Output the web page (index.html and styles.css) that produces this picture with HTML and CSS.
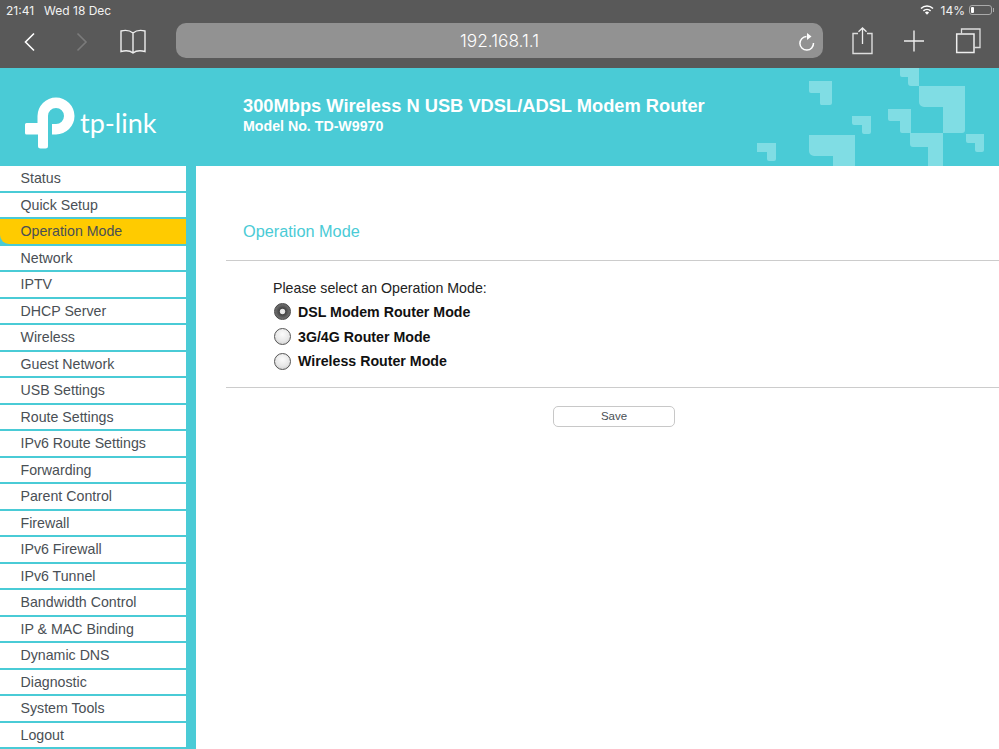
FILE: index.html
```html
<!DOCTYPE html>
<html lang="en">
<head>
<meta charset="utf-8">
<title>Operation Mode</title>
<link rel="stylesheet" href="styles.css">
</head>
<body>
<div class="page">
  <header class="chrome">
    <div class="status">
      <span class="time">21:41</span>
      <span class="date">Wed 18 Dec</span>
      <span class="status-right">
        <svg class="wifi" width="14" height="10" viewBox="0 0 14 10"><path d="M7 9.8 4.9 7.5a3 3 0 0 1 4.2 0Z" fill="#fff"/><path d="M3.4 5.9a5.2 5.2 0 0 1 7.2 0M1 3.5a8.6 8.6 0 0 1 12 0" fill="none" stroke="#fff" stroke-width="1.5"/></svg>
        <span class="pct">14%</span>
        <span class="battery"><span class="battery-fill"></span></span>
        <span class="battery-nub"></span>
      </span>
    </div>
    <div class="toolbar">
      <svg class="icon back" viewBox="0 0 28 28"><path d="M18 6.5 9.5 15l8.5 8.5" stroke="#fff" stroke-width="1.6" fill="none"/></svg>
      <svg class="icon forward" viewBox="0 0 28 28"><path d="M9.5 6.5 18 15l-8.5 8.5" stroke="#7b7b7b" stroke-width="1.6" fill="none"/></svg>
      <svg class="icon book" viewBox="0 0 28 28"><path d="M14 6C11 3.5 6 3 2 4v20.500c4-1 9-1 12 1.500 3-2.500 8-2.500 12-1.500V4c-4-1-9-.5-12 2v19.500" stroke="#eee" stroke-width="1.400" fill="none"/></svg>
      <div class="url">
        <span class="url-text">192.168.1.1</span>
        <svg class="reload" width="20" height="20" viewBox="0 0 20 20"><path d="M9.500 4.500A6.800 6.800 0 1 0 16.500 11" stroke="#fff" stroke-width="1.500" fill="none"/><path d="M10 1 14.500 4.500 10 8Z" fill="#fff"/></svg>
      </div>
      <svg class="icon share" viewBox="0 0 28 28"><path d="M10 6.500H5v20h19v-20h-5" stroke="#ddd" stroke-width="1.400" fill="none"/><path d="M14.500 1v16M10.500 4.800 14.500 1l4 3.800" stroke="#eee" stroke-width="1.300" fill="none"/></svg>
      <svg class="icon plus" viewBox="0 0 28 28"><path d="M4 14h20M14 3.500v21" stroke="#eee" stroke-width="1.400" fill="none"/></svg>
      <svg class="icon tabs" viewBox="0 0 28 28"><path d="M2.700 7H20v18.500H2.700Z" stroke="#eee" stroke-width="1.500" fill="none"/><path d="M7.500 6.500V2H26v18.500h-5.500" stroke="#ddd" stroke-width="1.300" fill="none"/></svg>
    </div>
  </header>

  <section class="banner">
    <svg class="pattern" width="999" height="98" viewBox="0 68 999 98" aria-hidden="true">
      <g fill="#80dde4">
        <path d="M900 68h19v18h-8a3 3 0 0 1-3-3v-6h-6a2 2 0 0 1-2-2Z"/>
        <path d="M919 86h46v44a3 3 0 0 1-3 3h-19v-26h-19a5 5 0 0 1-5-5Z"/>
        <path d="M809 81h23v22a2 2 0 0 1-2 2h-9a2 2 0 0 1-1-2v-10h-9a2 2 0 0 1-2-2Z"/>
        <path d="M852 116h19v16a2 2 0 0 1-2 2h-5a2 2 0 0 1-2-2v-7h-8a2 2 0 0 1-2-2Z"/>
        <path d="M888 109h23v24h-9a2 2 0 0 1-2-2v-10h-10a2 2 0 0 1-2-2Z"/>
        <path d="M910 133h33v33h-15v-19h-15a3 3 0 0 1-3-3Z"/>
        <path d="M966 134h18v16a2 2 0 0 1-2 2h-5a2 2 0 0 1-2-2v-7h-7a2 2 0 0 1-2-2Z"/>
        <path d="M809 135h46v31h-22v-10h-19a5 5 0 0 1-5-5Z"/>
        <path d="M757 143h19v16a2 2 0 0 1-2 2h-5a2 2 0 0 1-2-2v-7h-10Z"/>
      </g>
    </svg>
    <div class="brand">
      <svg class="logo-mark" width="51" height="53" viewBox="25 94 51 53"><path d="M25 122.500q0-1.500 1.500-1.500H37.500v-7A18.500 18.500 0 1 1 56 132.500h-4V122h4a8 8 0 1 0-8-8v30q0 2.500-2.500 2.500h-5q-2.500 0-2.500-2.500v-11.500H26.500q-1.500 0-1.500-1.500Z" fill="#fff"/></svg>
      <span class="logo-text">tp-link</span>
    </div>
    <div class="product">
      <div class="product-name">300Mbps Wireless N USB VDSL/ADSL Modem Router</div>
      <div class="product-model">Model No. TD-W9970</div>
    </div>
  </section>

  <div class="main">
    <nav class="menu">
      <a class="item">Status</a>
      <a class="item">Quick Setup</a>
      <a class="item active">Operation Mode</a>
      <a class="item">Network</a>
      <a class="item">IPTV</a>
      <a class="item">DHCP Server</a>
      <a class="item">Wireless</a>
      <a class="item">Guest Network</a>
      <a class="item">USB Settings</a>
      <a class="item">Route Settings</a>
      <a class="item">IPv6 Route Settings</a>
      <a class="item">Forwarding</a>
      <a class="item">Parent Control</a>
      <a class="item">Firewall</a>
      <a class="item">IPv6 Firewall</a>
      <a class="item">IPv6 Tunnel</a>
      <a class="item">Bandwidth Control</a>
      <a class="item">IP &amp; MAC Binding</a>
      <a class="item">Dynamic DNS</a>
      <a class="item">Diagnostic</a>
      <a class="item">System Tools</a>
      <a class="item">Logout</a>
    </nav>
    <main class="content">
      <h1 class="title">Operation Mode</h1>
      <form class="form">
        <p class="prompt">Please select an Operation Mode:</p>
        <label class="option"><span class="radio checked"></span>DSL Modem Router Mode</label>
        <label class="option"><span class="radio"></span>3G/4G Router Mode</label>
        <label class="option"><span class="radio"></span>Wireless Router Mode</label>
      </form>
      <div class="actions"><button class="save" type="button">Save</button></div>
    </main>
  </div>
</div>
</body>
</html>
```
FILE: styles.css
```css
* { box-sizing: border-box; }
html, body { margin: 0; padding: 0; }
body { font-family: "Liberation Sans", Arial, sans-serif; background: #fff; }
.page { width: 999px; height: 749px; overflow: hidden; display: flex; flex-direction: column; }

/* Browser chrome */
.chrome { height: 68px; background: #595959; color: #fff; flex: none; }
.status { height: 23px; display: flex; align-items: center; padding: 0 5px 3px 6px; font-family: Inter, "Liberation Sans", sans-serif; font-size: 12px; color: #f2f2f2; }
.date { margin-left: 10px; }
.status-right { margin-left: auto; display: flex; align-items: center; }
.pct { margin-left: 7px; }
.battery { margin-left: 4px; width: 23px; height: 10px; border: 1px solid #aaa; border-radius: 3px; padding: 1px; display: block; }
.battery-fill { display: block; width: 3px; height: 100%; background: #fff; border-radius: 1px; }
.battery-nub { width: 1px; height: 4px; background: #aaa; margin-left: 1px; }
.toolbar { height: 45px; display: flex; align-items: center; padding: 0 0 10px 16px; }
.icon { width: 28px; height: 28px; flex: none; display: block; }
.forward { margin-left: 24px; }
.book { margin-left: 22.500px; }
.url { margin-left: 29.500px; width: 647px; height: 35px; border-radius: 10px; background: #929292; position: relative; display: flex; align-items: center; justify-content: center; }
.url-text { font-family: Inter, "Liberation Sans", sans-serif; font-size: 17.300px; font-weight: 300; color: #fff; }
.reload { position: absolute; right: 6px; top: 9px; }
.share { margin-left: 25px; }
.plus { margin-left: 24px; }
.tabs { margin-left: 26px; }

/* Router banner */
.banner { height: 98px; flex: none; background: #4acbd6; position: relative; display: flex; align-items: center; color: #fff; }
.pattern { position: absolute; left: 0; top: 0; }
.brand { width: 243px; padding-left: 25px; display: flex; align-items: flex-start; position: relative; height: 53px; flex: none; margin-top: 10px; }
.logo-text { font-family: Lato, sans-serif; font-size: 27px; font-weight: 400; margin-left: 4px; margin-top: 11px; line-height: 32px; color: #fff; }
.product { position: relative; margin-top: -3px; font-weight: bold; }
.product-name { font-size: 18.300px; line-height: 20px; }
.product-model { font-size: 14.200px; line-height: 20px; }

/* Main layout */
.main { flex: 1; display: flex; min-height: 0; }
.menu { width: 195.500px; flex: none; background: #4acbd6; padding-right: 9.500px; display: grid; grid-auto-rows: 24.500px; row-gap: 2px; }
.item { background: #fff; color: #4a4f55; font-size: 14.200px; line-height: 24.500px; padding-left: 20.500px; white-space: nowrap; }
.item.active { background: #ffcb00; border-bottom-left-radius: 9px; }

/* Content */
.content { flex: 1; padding: 0 0 0 30.500px; min-width: 0; }
.title { margin: 0; padding: 55px 0 0 17px; height: 94.500px; font-size: 16.300px; line-height: 20px; font-weight: normal; color: #4acbd6; border-bottom: 1px solid #ccc; }
.form { height: 127px; padding: 19px 0 0 47px; border-bottom: 1px solid #ccc; }
.prompt { margin: 0 0 3px; font-size: 14.200px; line-height: 17px; color: #222; }
.option { display: flex; align-items: center; height: 24.700px; font-size: 14.200px; font-weight: bold; color: #111; }
.radio { width: 17px; height: 17px; border-radius: 50%; margin: 0 7px 0 1px; flex: none; border: 1px solid #555; background: radial-gradient(circle at 50% 35%, #fbfbfb 0, #e8e8e8 55%, #c4c4c4 100%); }
.radio.checked { border-color: #444; background: radial-gradient(circle, #f0f0f0 0, #e2e2e2 22%, #444 30%, #666 60%, #8a8a8a 100%); }
.actions { padding: 18px 0 0 327px; }
.save { display: block; width: 122px; height: 21px; padding: 0; border: 1px solid #c8c8c8; border-radius: 5px; background: #fff; color: #4a4f55; font-family: "Liberation Sans", Arial, sans-serif; font-size: 11.500px; }
```
